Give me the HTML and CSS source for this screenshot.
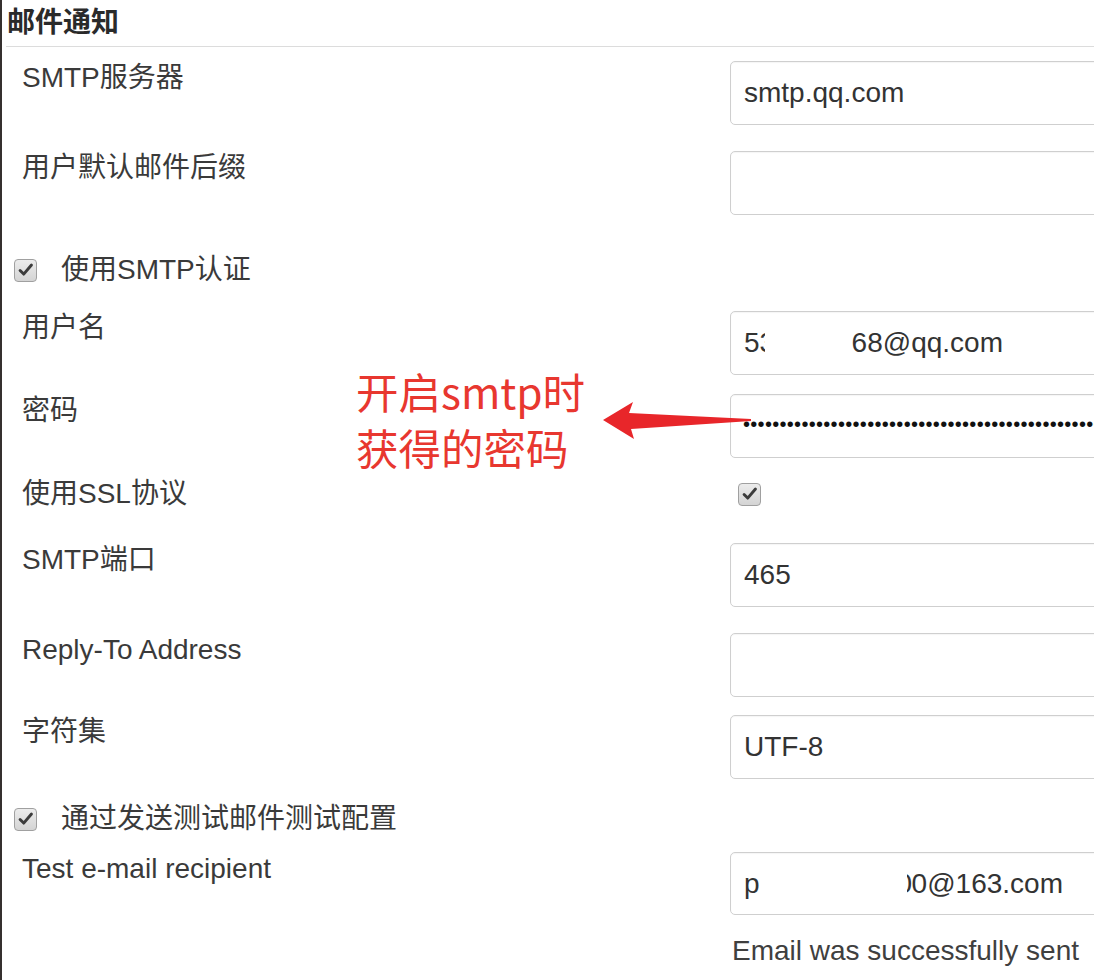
FILE: index.html
```html
<!DOCTYPE html>
<html lang="zh">
<head>
<meta charset="utf-8">
<title>邮件通知</title>
<link rel="stylesheet" href="styles.css">
</head>
<body>
<div class="page">
  <div class="section-title">邮件通知</div>

  <div class="form">
    <div class="row r-first">
      <div class="label">SMTP服务器</div>
      <div class="control"><div class="field">smtp.qq.com</div></div>
    </div>
    <div class="row r-gap">
      <div class="label">用户默认邮件后缀</div>
      <div class="control"><div class="field"></div></div>
    </div>

    <div class="check-row cr-auth">
      <span class="cb"><svg viewBox="0 0 22 22" width="20" height="20"><path d="M4.5 11.5 L8.5 15.5 L17 5.5" fill="none" stroke="#3c3c3c" stroke-width="3.2" stroke-linecap="round" stroke-linejoin="round"/></svg></span>
      <span class="check-label">使用SMTP认证</span>
    </div>

    <div class="row">
      <div class="label">用户名</div>
      <div class="control"><div class="field"><span>5</span><span class="cut">3</span><span class="gap-a"></span>68@qq.com</div></div>
    </div>
    <div class="row r-pw">
      <div class="label">密码</div>
      <div class="control"><div class="field pw">••••••••••••••••••••••••••••••••••••••••••••••••••</div></div>
    </div>
    <div class="row r-ssl">
      <div class="label label-mid">使用SSL协议</div>
      <div class="control ctl-check"><span class="cb"><svg viewBox="0 0 22 22" width="20" height="20"><path d="M4.5 11.5 L8.5 15.5 L17 5.5" fill="none" stroke="#3c3c3c" stroke-width="3.2" stroke-linecap="round" stroke-linejoin="round"/></svg></span></div>
    </div>
    <div class="row r-port">
      <div class="label">SMTP端口</div>
      <div class="control"><div class="field">465</div></div>
    </div>
    <div class="row r-gap">
      <div class="label">Reply-To Address</div>
      <div class="control"><div class="field"></div></div>
    </div>
    <div class="row r-tight">
      <div class="label">字符集</div>
      <div class="control"><div class="field">UTF-8</div></div>
    </div>

    <div class="check-row cr-test">
      <span class="cb"><svg viewBox="0 0 22 22" width="20" height="20"><path d="M4.5 11.5 L8.5 15.5 L17 5.5" fill="none" stroke="#3c3c3c" stroke-width="3.2" stroke-linecap="round" stroke-linejoin="round"/></svg></span>
      <span class="check-label">通过发送测试邮件测试配置</span>
    </div>

    <div class="row r-test">
      <div class="label">Test e-mail recipient</div>
      <div class="control">
        <div class="field"><span>p</span><span class="gap-b"></span><span class="cut-l"><span class="cut-in">0</span></span>0@163.com</div>
        <div class="result">Email was successfully sent</div>
      </div>
    </div>
  </div>

  <div class="note">开启smtp时<br>获得的密码</div>
  <svg class="arrow" viewBox="0 0 150 40" width="150" height="40">
    <path d="M0 18 L30 0 L26 11 L148 17 L148 19 L28 27 L31 37 Z" fill="#e8262a"/>
  </svg>
</div>
</body>
</html>
```
FILE: styles.css
```css
html, body {
  margin: 0;
  padding: 0;
  background: #ffffff;
}
body {
  width: 1094px;
  height: 980px;
  overflow: hidden;
  font-family: "Liberation Sans", "Noto Sans CJK SC", Arial, sans-serif;
  color: #333333;
}
.page {
  position: relative;
  height: 980px;
  border-left: 2px solid #35302f;
  box-sizing: border-box;
}
.section-title {
  margin-left: 4px;
  padding-left: 1px;
  height: 46px;
  line-height: 40px;
  font-size: 28px;
  font-weight: bold;
  color: #2a2a2a;
  border-bottom: 1px solid #dcdcdc;
  font-family: "Noto Sans CJK SC", "Liberation Sans", sans-serif;
}
.form {
  display: flex;
  flex-direction: column;
}
.row {
  display: flex;
  align-items: flex-start;
}
.r-first { margin-top: 14px; }
.r-gap { margin-top: 26px; }
.r-tight { margin-top: 18px; }
.r-pw { margin-top: 19px; }
.r-ssl { margin-top: 21px; height: 30px; align-items: center; }
.r-port { margin-top: 34px; }
.r-test { margin-top: 18px; }
.label {
  width: 728px;
  flex: none;
  box-sizing: border-box;
  padding-left: 20px;
  padding-top: 2px;
  font-size: 28px;
  line-height: 30px;
  color: #3a3a3a;
}
.label-mid { padding-top: 0; }
.control {
  flex: none;
  width: 400px;
}
.ctl-check {
  padding-left: 8px;
  display: flex;
  align-items: center;
}
.field {
  box-sizing: border-box;
  height: 64px;
  border: 1px solid #cfcfcf;
  border-radius: 5px;
  padding-left: 13px;
  font-size: 28px;
  line-height: 62px;
  color: #333333;
  white-space: nowrap;
  overflow: hidden;
  box-shadow: inset 0 1px 1px rgba(0,0,0,0.04);
}
.r-test .field { height: 63px; line-height: 61px; }
.pw {
  padding-left: 12px;
  font-size: 20px;
  letter-spacing: 0.3px;
  line-height: 58px;
  color: #111;
}
.cut {
  display: inline-block;
  width: 5px;
  overflow: hidden;
  vertical-align: top;
}
.gap-a { display: inline-block; width: 87px; }
.gap-b { display: inline-block; width: 147px; }
.cut-l {
  display: inline-block;
  width: 5px;
  overflow: hidden;
  vertical-align: top;
}
.cut-in {
  display: inline-block;
  margin-left: -10px;
}
.result {
  margin-top: 21px;
  padding-left: 2px;
  font-size: 28px;
  line-height: 30px;
  color: #3f3f3f;
  white-space: nowrap;
}
.check-row {
  display: flex;
  align-items: center;
  height: 30px;
  padding-left: 12px;
}
.cr-auth { margin-top: 40px; margin-bottom: 26px; }
.cr-test { margin-top: 25px; }
.cb {
  box-sizing: border-box;
  width: 23px;
  height: 23px;
  border: 1px solid #a0a0a0;
  border-radius: 4px;
  background: linear-gradient(#ececec, #d4d4d4);
  display: inline-flex;
  align-items: center;
  justify-content: center;
  flex: none;
}
.check-label {
  margin-left: 24px;
  font-size: 28px;
  line-height: 30px;
  color: #3a3a3a;
}
.note {
  position: absolute;
  left: 354px;
  top: 363px;
  font-family: "Noto Sans CJK SC", "Liberation Sans", sans-serif;
  font-size: 42.5px;
  line-height: 56px;
  color: #e8372f;
}
.arrow {
  position: absolute;
  left: 601px;
  top: 402px;
}
```
